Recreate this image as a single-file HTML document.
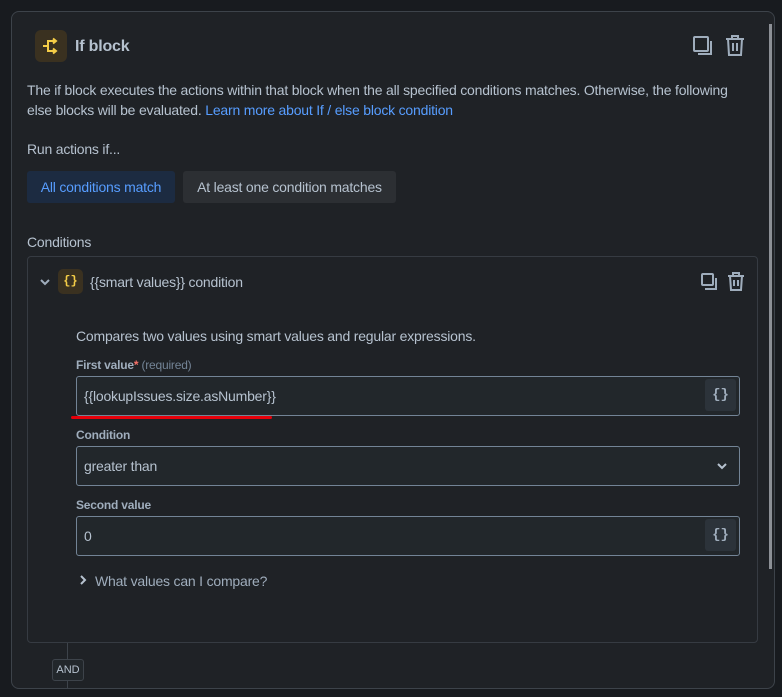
<!DOCTYPE html>
<html><head><meta charset="utf-8"><style>
*{box-sizing:border-box;margin:0;padding:0}
body{width:782px;height:697px;background:#181b1f;font-family:"Liberation Sans",sans-serif;color:#b6c2cf;position:relative;overflow:hidden;font-size:14px;letter-spacing:-0.2px}
.a{position:absolute}
.card{left:11px;top:11px;width:764px;height:678px;background:#1f2226;border:1px solid #3d434a;border-radius:8px}
.inner{left:27px;top:256px;width:731px;height:387px;border:1px solid #363b42;border-radius:4px;background:#1f2226}
.inp{left:76px;width:664px;height:40px;border:1px solid #738496;border-radius:3px;background:#22272b;color:#b6c2cf;font-size:14px;padding-left:7px;line-height:38px}
.btn{right:3px;top:2px;width:31px;height:32px;background:#2c333a;border-radius:3px;color:#9fadbc;font-family:"Liberation Mono",monospace;font-weight:bold;font-size:14px;text-align:center;line-height:32px;letter-spacing:0}
.lbl{left:76px;font-size:12px;font-weight:bold;color:#9fadbc}
</style></head><body>
<div class="a card"></div>
<div class="a" style="left:769px;top:24px;width:3px;height:545px;background:#8c9096"></div>
<div class="a" style="left:35px;top:30px;width:32px;height:32px;background:#3a3120;border-radius:6px"></div>
<svg class="a" style="left:41px;top:36px" width="20" height="20" viewBox="0 0 20 20" fill="none" stroke="#f5cd47" stroke-width="2"><path d="M2 10h6M7 10V5h8M7 10v5h8M12 2.5l3 2.5-3 2.5M12 12.5l3 2.5-3 2.5"/></svg>
<div class="a" style="left:75px;top:38px;font-size:16px;font-weight:bold;color:#b6c2cf">If block</div>
<svg class="a" style="left:692px;top:35px" width="22" height="22" viewBox="0 0 22 22" fill="none" stroke="#9fadbc" stroke-width="2"><rect x="2" y="2" width="14" height="14" rx="1"/><path d="M19 6v13H6"/></svg>
<svg class="a" style="left:724px;top:33px" width="22" height="24" viewBox="0 0 22 24" fill="none" stroke="#9fadbc" stroke-width="2"><path d="M2 6h18M8 6V3h6v3M4 6l1 16h12l1-16M9 10v8M13 10v8"/></svg>
<div class="a" style="left:27px;top:80px;width:712px;line-height:20px;color:#b6c2cf">The if block executes the actions within that block when the all specified conditions matches. Otherwise, the following else blocks will be evaluated. <span style="color:#579dff">Learn more about If / else block condition</span></div>
<div class="a" style="left:27px;top:141px">Run actions if...</div>
<div class="a" style="left:27px;top:171px;width:148px;height:32px;background:#1c2b41;border-radius:3px;color:#579dff;line-height:32px;text-align:center">All conditions match</div>
<div class="a" style="left:183px;top:171px;width:213px;height:32px;background:#2c2f33;border-radius:3px;color:#b6c2cf;line-height:32px;text-align:center">At least one condition matches</div>
<div class="a" style="left:27px;top:234px">Conditions</div>
<div class="a inner"></div>
<svg class="a" style="left:39px;top:277px" width="12" height="10" viewBox="0 0 12 10" fill="none" stroke="#9fadbc" stroke-width="2"><path d="M2 3l4 4 4-4"/></svg>
<div class="a" style="left:58px;top:269px;width:25px;height:25px;background:#3a3120;border-radius:5px;color:#f5cd47;font-family:'Liberation Mono',monospace;font-weight:bold;font-size:12px;text-align:center;line-height:25px;letter-spacing:0">{}</div>
<div class="a" style="left:90px;top:274px;color:#b6c2cf">{{smart values}} condition</div>
<svg class="a" style="left:700px;top:273px" width="18" height="18" viewBox="0 0 18 18" fill="none" stroke="#9fadbc" stroke-width="2"><rect x="2" y="1" width="11" height="11" rx="1"/><path d="M16 5v11H5"/></svg>
<svg class="a" style="left:727px;top:271px" width="18" height="20" viewBox="0 0 18 20" fill="none" stroke="#9fadbc" stroke-width="2"><path d="M1 5h16M6 5V2h6v3M3 5l1 14h10l1-14M7 9v6M11 9v6"/></svg>
<div class="a" style="left:76px;top:328px;color:#b6c2cf">Compares two values using smart values and regular expressions.</div>
<div class="a lbl" style="top:358px">First value<span style="color:#f87168">*</span> <span style="color:#738496;font-weight:normal">(required)</span></div>
<div class="a inp" style="top:376px">{{lookupIssues.size.asNumber}}<div class="a btn">{}</div></div>
<div class="a" style="left:71px;top:416px;width:201px;height:3px;background:#e5000a;border-radius:2px"></div>
<div class="a lbl" style="top:428px">Condition</div>
<div class="a inp" style="top:446px">greater than<svg class="a" style="right:12px;top:15px" width="10" height="8" viewBox="0 0 10 8" fill="none" stroke="#b6c2cf" stroke-width="2"><path d="M1 2l4 4 4-4"/></svg></div>
<div class="a lbl" style="top:498px">Second value</div>
<div class="a inp" style="top:516px">0<div class="a btn">{}</div></div>
<svg class="a" style="left:79px;top:575px" width="8" height="10" viewBox="0 0 8 10" fill="none" stroke="#b6c2cf" stroke-width="2"><path d="M2 1l4 4-4 4"/></svg>
<div class="a" style="left:95px;top:573px;color:#9fadbc">What values can I compare?</div>
<div class="a" style="left:67px;top:643px;width:1px;height:46px;background:#3d434a"></div>
<div class="a" style="left:52px;top:659px;width:32px;height:22px;background:#22272b;border:1px solid #3d434a;border-radius:3px;font-size:11px;color:#b6c2cf;text-align:center;line-height:20px;letter-spacing:0">AND</div>
</body></html>
